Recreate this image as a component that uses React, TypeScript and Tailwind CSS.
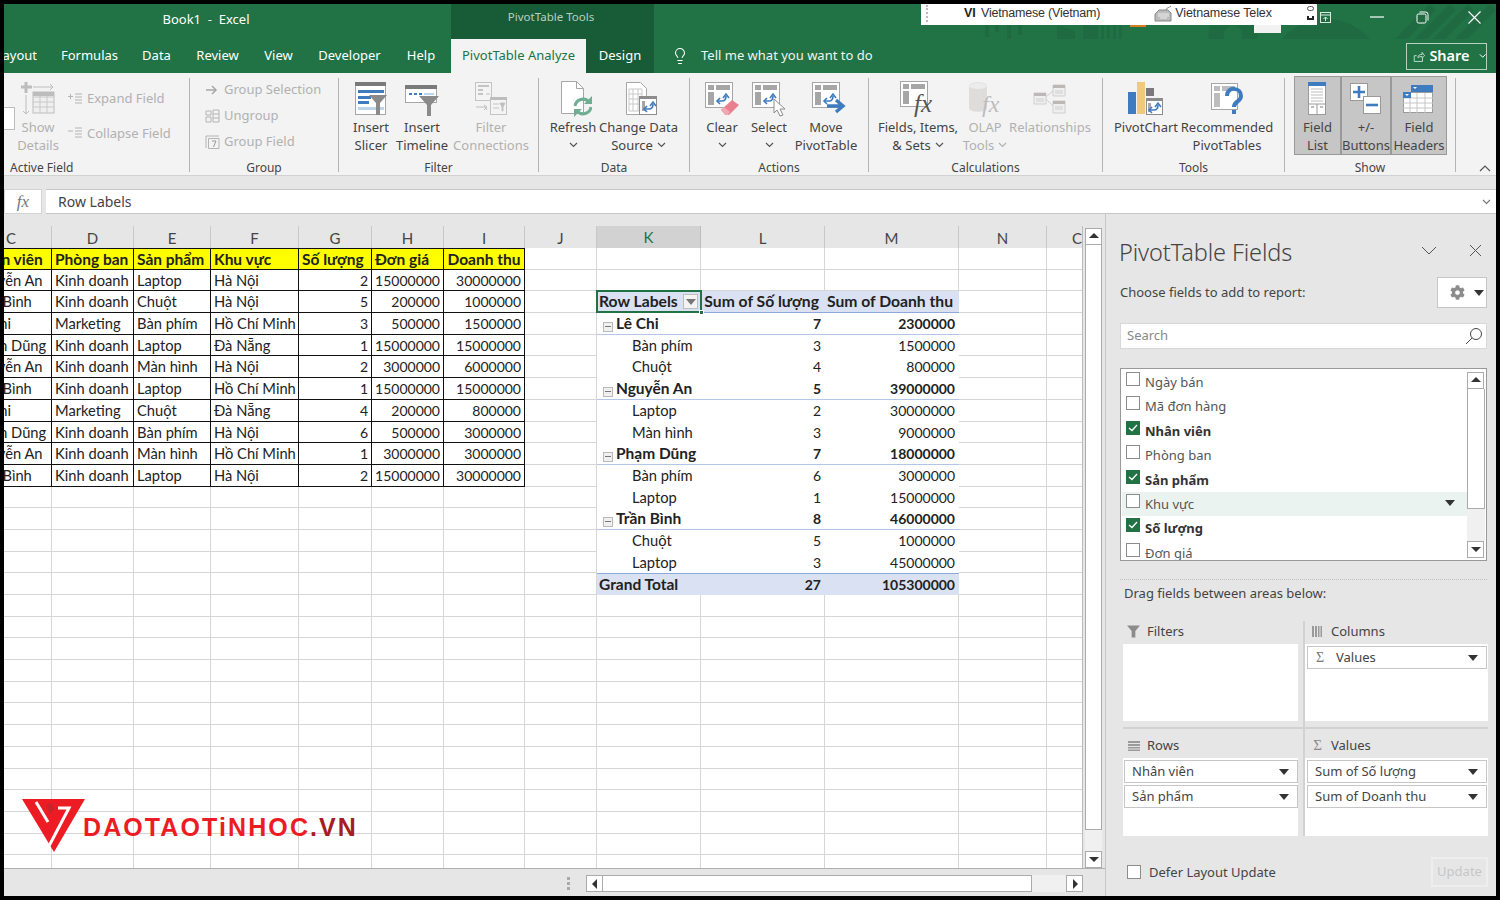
import { type ReactNode } from 'react'
import { Lightbulb } from 'lucide-react'
import { FaCog } from 'react-icons/fa'

const dataRows = [
  ['Nguyễn An', 'Kinh doanh', 'Laptop', 'Hà Nội', '2', '15000000', '30000000'],
  ['Trần Bình', 'Kinh doanh', 'Chuột', 'Hà Nội', '5', '200000', '1000000'],
  ['Lê Chi', 'Marketing', 'Bàn phím', 'Hồ Chí Minh', '3', '500000', '1500000'],
  ['Phạm Dũng', 'Kinh doanh', 'Laptop', 'Đà Nẵng', '1', '15000000', '15000000'],
  ['Nguyễn An', 'Kinh doanh', 'Màn hình', 'Hà Nội', '2', '3000000', '6000000'],
  ['Trần Bình', 'Kinh doanh', 'Laptop', 'Hồ Chí Minh', '1', '15000000', '15000000'],
  ['Lê Chi', 'Marketing', 'Chuột', 'Đà Nẵng', '4', '200000', '800000'],
  ['Phạm Dũng', 'Kinh doanh', 'Bàn phím', 'Hà Nội', '6', '500000', '3000000'],
  ['Nguyễn An', 'Kinh doanh', 'Màn hình', 'Hồ Chí Minh', '1', '3000000', '3000000'],
  ['Trần Bình', 'Kinh doanh', 'Laptop', 'Hà Nội', '2', '15000000', '30000000'],
]
const dataHeader = ['Nhân viên', 'Phòng ban', 'Sản phẩm', 'Khu vực', 'Số lượng', 'Đơn giá', 'Doanh thu']

const pivotRows = [
  { t: 'head', a: 'Row Labels', b: 'Sum of Số lượng', c: 'Sum of Doanh thu' },
  { t: 'group', a: 'Lê Chi', b: '7', c: '2300000' },
  { t: 'item', a: 'Bàn phím', b: '3', c: '1500000' },
  { t: 'item', a: 'Chuột', b: '4', c: '800000' },
  { t: 'group', a: 'Nguyễn An', b: '5', c: '39000000' },
  { t: 'item', a: 'Laptop', b: '2', c: '30000000' },
  { t: 'item', a: 'Màn hình', b: '3', c: '9000000' },
  { t: 'group', a: 'Phạm Dũng', b: '7', c: '18000000' },
  { t: 'item', a: 'Bàn phím', b: '6', c: '3000000' },
  { t: 'item', a: 'Laptop', b: '1', c: '15000000' },
  { t: 'group', a: 'Trần Bình', b: '8', c: '46000000' },
  { t: 'item', a: 'Chuột', b: '5', c: '1000000' },
  { t: 'item', a: 'Laptop', b: '3', c: '45000000' },
  { t: 'total', a: 'Grand Total', b: '27', c: '105300000' },
]

const colNames = ['C', 'D', 'E', 'F', 'G', 'H', 'I', 'J', 'K', 'L', 'M', 'N', 'C']
const fields = [
  { name: 'Ngày bán', on: false },
  { name: 'Mã đơn hàng', on: false },
  { name: 'Nhân viên', on: true },
  { name: 'Phòng ban', on: false },
  { name: 'Sản phẩm', on: true },
  { name: 'Khu vực', on: false, hover: true },
  { name: 'Số lượng', on: true },
  { name: 'Đơn giá', on: false },
]

function Chevron({ className = '', color = '#555' }: { className?: string; color?: string }) {
  return (
    <svg width="9" height="6" viewBox="0 0 9 6" className={className}>
      <path d="M1 1l3.5 3.5L8 1" fill="none" stroke={color} strokeWidth="1.2" />
    </svg>
  )
}

function Caret({ color = '#333' }: { color?: string }) {
  return (
    <svg width="10" height="6" viewBox="0 0 10 6" className="shrink-0">
      <path d="M0 0h10L5 6z" fill={color} />
    </svg>
  )
}

function PivotBase({ c = '#a6a6a6' }: { c?: string }) {
  return (
    <g>
      <rect x="1.5" y="1.5" width="27" height="25" fill="#fff" stroke={c} />
      <rect x="4" y="4" width="6" height="5" fill={c} />
      <rect x="12" y="4" width="14" height="5" fill={c} />
      <rect x="4" y="11" width="6" height="13" fill={c} />
    </g>
  )
}

function SwapArrows({ x = 12, y = 11 }: { x?: number; y?: number }) {
  return (
    <g transform={`translate(${x} ${y})`} fill="none" stroke="#3f7cbf" strokeWidth="1.6">
      <path d="M1 9h5c3 0 4-2 4-5" />
      <path d="M7 6l3-4 3 4" />
      <path d="M4 6L1 9l3 3" />
    </g>
  )
}

const icons: Record<string, ReactNode> = {
  details: (
    <svg width="36" height="36" viewBox="0 0 36 36">
      <path d="M6 1v11M1 6h11" stroke="#bdbdbd" strokeWidth="3" />
      <path d="M13 6h20M30 3l3 3-3 3M6 14v19M3 30l3 3 3-3" fill="none" stroke="#bdbdbd" />
      <rect x="13" y="11" width="21" height="21" fill="#efefef" stroke="#bdbdbd" />
      <path d="M13 16h21M13 21h21M13 26h21M20 11v21M27 11v21" stroke="#c9c9c9" />
      <rect x="13" y="11" width="21" height="4" fill="#bdbdbd" />
    </svg>
  ),
  slicer: (
    <svg width="34" height="36" viewBox="0 0 34 36">
      <rect x="1.5" y="1.5" width="30" height="32" fill="#fff" stroke="#a6a6a6" />
      <rect x="1" y="1" width="31" height="4" fill="#7a7a7a" />
      <rect x="4" y="9" width="26" height="3" fill="#3f7cbf" />
      <rect x="4" y="15" width="13" height="3" fill="#3f7cbf" />
      <rect x="4" y="20" width="11" height="3" fill="#3f7cbf" />
      <rect x="4" y="26" width="26" height="3" fill="#bcd4ec" />
      <path d="M15 14h18l-7 8v12h-4V22z" fill="#8a8a8a" />
    </svg>
  ),
  timeline: (
    <svg width="36" height="36" viewBox="0 0 36 36">
      <rect x="1.5" y="4.5" width="31" height="17" fill="#fff" stroke="#a6a6a6" />
      <rect x="1" y="4" width="32" height="4" fill="#7a7a7a" />
      <path d="M5 13h3M10 13h3M15 13h3" stroke="#3f7cbf" strokeWidth="2" />
      <path d="M20 13h10" stroke="#bcd4ec" strokeWidth="2" />
      <path d="M15 15h20l-8 9v11h-4V24z" fill="#8a8a8a" />
    </svg>
  ),
  connections: (
    <svg width="34" height="36" viewBox="0 0 34 36">
      <rect x="1.5" y="1.5" width="16" height="18" fill="#f4f4f4" stroke="#c4c4c4" />
      <path d="M4 5h11M4 9h5M4 13h5" stroke="#c4c4c4" strokeWidth="2" />
      <rect x="16.5" y="16.5" width="16" height="17" fill="#f4f4f4" stroke="#c4c4c4" />
      <rect x="16" y="16" width="17" height="3" fill="#bdbdbd" />
      <path d="M19 23h6M19 27h6M26 22h5l-2 4v4h-1v-4z" stroke="#c4c4c4" fill="#bdbdbd" />
      <path d="M2 26h9l2 3M10 24l3 2-3 3M16 13l-4 0" stroke="#bdbdbd" fill="none" />
    </svg>
  ),
  refresh: (
    <svg width="32" height="38" viewBox="0 0 32 38" className="ml-[6px]">
      <path d="M1.5 1.5h15l7 7v25h-22z" fill="#fff" stroke="#a6a6a6" />
      <path d="M16.5 1.5v7h7" fill="none" stroke="#a6a6a6" />
      <path d="M15 26a8 8 0 0 1 14-4M31 27a8 8 0 0 1-14 4" fill="none" stroke="#6fae93" strokeWidth="3" />
      <path d="M32 16v8h-8zM14 37v-8h8z" fill="#6fae93" />
    </svg>
  ),
  source: (
    <svg width="34" height="36" viewBox="0 0 34 36" className="ml-[6px]">
      <path d="M1.5 1.5h14l6 6v26h-20z" fill="#fff" stroke="#a6a6a6" />
      <path d="M4 8h13v22H4zM4 13h13M4 18h13M4 23h13M8 8v22M13 8v22" fill="none" stroke="#c9c9c9" />
      <rect x="14.5" y="15.5" width="17" height="18" fill="#fff" stroke="#8c8c8c" />
      <rect x="14" y="15" width="18" height="3" fill="#8c8c8c" />
      <rect x="17" y="20" width="3" height="10" fill="#a6a6a6" />
      <SwapArrows x={18} y={19} />
    </svg>
  ),
  clear: (
    <svg width="36" height="36" viewBox="0 0 36 36">
      <PivotBase />
      <SwapArrows />
      <path d="M17 29l11-10 7 5-10 10h-3z" fill="#e8808f" />
      <path d="M17 29l3-3 6 5-2 3h-3z" fill="#f2a8b2" />
    </svg>
  ),
  select: (
    <svg width="36" height="36" viewBox="0 0 36 36">
      <PivotBase />
      <SwapArrows />
      <path d="M23 18v14l3-3 3 6 3-1-3-6h5z" fill="#fff" stroke="#8c8c8c" />
    </svg>
  ),
  move: (
    <svg width="36" height="36" viewBox="0 0 36 36" className="ml-[5px]">
      <PivotBase />
      <SwapArrows />
      <path d="M16 25h14M25 19l7 6-7 6" fill="none" stroke="#3f7cbf" strokeWidth="3.4" />
    </svg>
  ),
  fields: (
    <svg width="38" height="38" viewBox="0 0 38 38">
      <PivotBase />
      <text x="15" y="32" fontFamily="Liberation Serif, serif" fontStyle="italic" fontSize="25" fill="#555">fx</text>
    </svg>
  ),
  olap: (
    <svg width="34" height="36" viewBox="0 0 34 36">
      <path d="M1 5c0-5 18-5 18 0v22c0 5-18 5-18 0z" fill="#dfdcdc" />
      <ellipse cx="10" cy="5" rx="9" ry="3" fill="#ececec" />
      <text x="14" y="31" fontFamily="Liberation Serif, serif" fontStyle="italic" fontSize="24" fill="#bdbdbd">fx</text>
    </svg>
  ),
  relations: (
    <svg width="34" height="30" viewBox="0 0 34 30">
      <path d="M13 13l7-6M13 15l7 7" stroke="#cfcfcf" fill="none" />
      <path d="M1 9h12v11H1zM20 1h12v11H20zM20 17h12v12H20z" fill="#efefef" stroke="#cfcfcf" />
      <path d="M1 9h12v3H1zM20 1h12v3H20zM20 17h12v3H20z" fill="#bdb8b8" />
      <path d="M3 15h8M3 17h8M22 7h8M22 9h8M22 23h8M22 25h8" stroke="#cfcfcf" />
    </svg>
  ),
  chart: (
    <svg width="36" height="34" viewBox="0 0 36 34">
      <rect x="0" y="10" width="8" height="22" fill="#3f7cbf" />
      <rect x="9" y="0" width="8" height="32" fill="#f0c981" />
      <rect x="18" y="6" width="8" height="8" fill="#7a7a7a" />
      <rect x="18.5" y="16.5" width="16" height="16" fill="#fff" stroke="#8c8c8c" />
      <rect x="18" y="16" width="17" height="3" fill="#8c8c8c" />
      <rect x="20" y="21" width="3" height="9" fill="#a6a6a6" />
      <SwapArrows x={20} y={19} />
    </svg>
  ),
  recommended: (
    <svg width="34" height="34" viewBox="0 0 34 34">
      <rect x="1.5" y="1.5" width="26" height="26" fill="#fff" stroke="#a6a6a6" />
      <rect x="4" y="4" width="6" height="5" fill="#bdbdbd" />
      <rect x="12" y="4" width="13" height="5" fill="#bdbdbd" />
      <rect x="4" y="11" width="6" height="14" fill="#bdbdbd" />
      <path d="M17 14c0-10 14-9 14 0 0 6-7 5-7 11" fill="none" stroke="#3f7cbf" strokeWidth="4" />
      <rect x="22" y="28" width="4" height="4" fill="#3f7cbf" />
    </svg>
  ),
  fieldList: (
    <svg width="20" height="34" viewBox="0 0 20 34">
      <rect x=".5" y=".5" width="17" height="32" fill="#fff" stroke="#9a9a9a" />
      <rect x="0" y="0" width="18" height="4" fill="#3f7cbf" />
      <path d="M3 7h12M3 10h12M3 13h12M3 16h12M3 19h12" stroke="#bdbdbd" />
      <path d="M0 22h18M9 22v11" stroke="#9a9a9a" />
      <path d="M3 25h3M12 25h3" stroke="#bdbdbd" strokeWidth="2" />
    </svg>
  ),
  plusMinus: (
    <svg width="32" height="32" viewBox="0 0 32 32">
      <rect x=".5" y=".5" width="17" height="17" fill="#fff" stroke="#9a9a9a" />
      <path d="M9 3v12M3 9h12" stroke="#3f7cbf" strokeWidth="2.6" />
      <rect x="13.5" y="13.5" width="17" height="17" fill="#fff" stroke="#9a9a9a" />
      <path d="M16 22h12" stroke="#3f7cbf" strokeWidth="2.6" />
    </svg>
  ),
  headers: (
    <svg width="32" height="30" viewBox="0 0 32 30">
      <rect x=".5" y="8.5" width="29" height="20" fill="#fff" stroke="#9a9a9a" />
      <path d="M0 14h30M0 19h30M0 24h30M7 9v20M14 9v20M22 9v20" stroke="#c6c6c6" />
      <rect x="8" y="1" width="22" height="7" fill="#3f7cbf" />
      <rect x="0" y="8" width="8" height="6" fill="#3f7cbf" />
      <path d="M2 10h4l-2 2zM10 3h4l-2 2z" fill="#fff" />
    </svg>
  ),
}

function RibbonButton({
  icon,
  lines,
  w,
  off,
  drop,
  active,
}: {
  icon: string
  lines: string[]
  w: number
  off?: boolean
  drop?: 'inline' | 'below'
  active?: boolean
}) {
  return (
    <div
      style={{ width: w }}
      className={`flex flex-col items-center shrink-0 ${
        active ? '-mt-[2px] h-[79px] bg-[#c6c6c6] border border-[#999] pt-[2px]' : 'pt-[1px]'
      } ${off ? 'text-[#b1b1b1]' : 'text-[#444]'}`}
    >
      <div className="h-[39px] flex items-center justify-center shrink-0">{icons[icon]}</div>
      {lines.map((l, i) => (
        <div key={i} className="h-[18px] leading-[18px] text-[13px] whitespace-nowrap flex items-center gap-[4px]">
          {l}
          {drop === 'inline' && i === lines.length - 1 && <Chevron color={off ? '#b1b1b1' : '#555'} />}
        </div>
      ))}
      {drop === 'below' && (
        <div className="h-[18px] flex items-center">
          <Chevron />
        </div>
      )}
    </div>
  )
}

function RibbonGroup({
  w,
  label,
  labelClass = 'text-center',
  className = '',
  children,
}: {
  w: number
  label: string
  labelClass?: string
  className?: string
  children: ReactNode
}) {
  return (
    <div style={{ width: w }} className="shrink-0 h-[94px] mt-[5px] border-r border-[#b4b4b4] flex flex-col">
      <div className={`h-[82px] shrink-0 flex ${className}`}>{children}</div>
      <div className={`shrink-0 h-[16px] leading-[16px] text-[12px] text-[#444] ${labelClass}`}>{label}</div>
    </div>
  )
}

function SmallRow({ icon, text, className = '' }: { icon: ReactNode; text: string; className?: string }) {
  return (
    <div className={`flex items-center gap-[4px] text-[13px] text-[#b1b1b1] whitespace-nowrap ${className}`}>
      <span className="w-[16px] flex justify-center">{icon}</span>
      {text}
    </div>
  )
}

function TitleBar() {
  return (
    <div className="relative h-[35px] bg-[#217346] flex text-white">
      <svg className="absolute left-[960px] top-0" width="532" height="69" viewBox="0 0 532 69" fill="#1f6a41">
        <path d="M21 21h4v12h-4zM31 21h4v7h-4zM43 21h4v22h-4zM54 21h4v10h-4z" />
        <path d="M93 21l18 6v21H93zM119 21h15v27h-15zM137 21h3v26h-3zM143 21h3v22h-3zM149 21h3v18h-3zM155 21h3v14h-3z" />
        <circle cx="269" cy="31" r="17" fill="none" stroke="#1f6a41" strokeWidth="15" />
        <circle cx="362" cy="73" r="58" />
        <path d="M466 0l-62 62 6 6 62-62zM486 0l-62 62 6 6 62-62zM504 0l-52 52 6 6 52-52zM526 0l-42 42 6 6 42-42z" />
      </svg>
      <div className="relative w-[447px] flex items-center justify-center pb-[4px] text-[13px]">
        <span className="ml-[-43px] whitespace-pre">Book1  -  Excel</span>
      </div>
      <div className="relative w-[203px] bg-[#185c37] flex items-center justify-center text-[11.5px] text-[#b5d1c1] pb-[9px]">
        <span className="ml-[-3px]">PivotTable Tools</span>
      </div>
      <div className="relative ml-auto flex items-center text-[#fff] pb-[9px]">
        <svg width="13" height="13" viewBox="0 0 13 13" className="mr-[38px]">
          <rect x="1.5" y="1.5" width="10" height="10" fill="none" stroke="#dce9e2" />
          <path d="M1 4h11M6.5 10V6M4.5 8l2-2 2 2" fill="none" stroke="#dce9e2" />
        </svg>
        <svg width="14" height="14" viewBox="0 0 14 14" className="mr-[32px]">
          <path d="M0 7h14" stroke="#fff" strokeWidth="1.2" />
        </svg>
        <svg width="13" height="13" viewBox="0 0 13 13" className="mr-[39px]">
          <rect x="1" y="3" width="9" height="9" rx="1.5" fill="none" stroke="#fff" />
          <path d="M3.5 1h6A2.5 2.5 0 0 1 12 3.5v6" fill="none" stroke="#fff" />
        </svg>
        <svg width="13" height="13" viewBox="0 0 13 13" className="mr-[15px]">
          <path d="M.5.5l12 12M12.5.5l-12 12" stroke="#fff" strokeWidth="1.2" />
        </svg>
      </div>
      {/* language bar sits on top of the title bar */}
      <div className="absolute left-[917px] top-0 w-[396px] h-[21px] bg-white flex items-center pb-[3px] text-[12.5px] text-[#333] font-['Liberation_Sans',sans-serif]">
        <div className="ml-[5px] h-[17px] border-l-2 border-dotted border-[#bbb]" />
        <span className="ml-[36px] w-[17px] font-semibold text-[#222]">VI</span>
        <span className="tracking-[-0.2px] whitespace-nowrap">Vietnamese (Vietnam)</span>
        <svg width="18" height="17" viewBox="0 0 18 17" className="ml-[54px]">
          <path d="M12 5c1-3 3-2 5-4" fill="none" stroke="#888" />
          <path d="M2 8l3-3h9l3 3v8H1V9z" fill="#bbb" stroke="#888" />
          <path d="M4 9h11M4 11h11M6 13h7" stroke="#eee" />
        </svg>
        <span className="ml-[3px] tracking-[-0.1px] whitespace-nowrap">Vietnamese Telex</span>
        <div className="ml-auto mr-[3px] flex flex-col items-center gap-[5px]">
          <div className="w-[7px] h-[5px] border border-[#555] rounded-full" />
          <div className="w-[7px] h-[4px] border-x-2 border-b-2 border-[#222]" />
        </div>
      </div>
      <div className="absolute left-[1126px] top-[21px] w-[16px] h-[2px] bg-[#d87f26]" />
      <div className="absolute left-[1250px] top-[21px] w-[27px] h-[8px] bg-[#f2f2f2]" />
    </div>
  )
}

function TabRow() {
  const tabs = [
    ['Formulas', 55],
    ['Data', 29],
    ['Review', 43],
    ['View', 29],
    ['Developer', 63],
    ['Help', 30],
  ] as const
  return (
    <div className="relative h-[34px] bg-[#217346] flex items-center text-white text-[13px]">
      <span className="w-[33px] overflow-hidden whitespace-nowrap flex justify-end">Layout</span>
      <div className="flex gap-[25px] ml-[25px]">
        {tabs.map(([t, w]) => (
          <span key={t} style={{ width: w }} className="text-center whitespace-nowrap flex justify-center">
            {t}
          </span>
        ))}
      </div>
      <div className="ml-[15px] h-full w-[135px] bg-[#f3f3f3] text-[#217346] flex items-center justify-center whitespace-nowrap">
        PivotTable Analyze
      </div>
      <div className="h-full w-[68px] bg-[#185c37] flex items-center justify-center">Design</div>
      <Lightbulb size={18} strokeWidth={1.4} className="ml-[17px]" />
      <span className="ml-[12px] text-[#eef5f1]">Tell me what you want to do</span>
      <div className="ml-auto mr-[9px] h-[27px] w-[81px] border border-[#b7d1c1] flex items-center pl-[6px] gap-[4px]">
        <svg width="15" height="15" viewBox="0 0 15 15" fill="none" stroke="#dce9e2">
          <path d="M1.5 13.5v-7h3M1.5 13.5h10v-4M6 9c0-3 2-4 5-4V2.5l3 4-3 3V7.500c-2 0-4 .5-5 1.500z" />
        </svg>
        <span className="font-semibold text-[14.5px]">Share</span>
        <Chevron color="#fff" className="ml-[5px]" />
      </div>
    </div>
  )
}

function Ribbon() {
  return (
    <div className="h-[103px] bg-[#f3f3f3] border-b border-[#d2d2d2] flex">
      <RibbonGroup w={186} label="Active Field" labelClass="pl-[6px] text-left" className="relative">
        <div className="absolute left-0 top-[29px] w-[11px] h-[23px] bg-white border border-l-0 border-[#bdbdbd]" />
        <div className="ml-[12px]">
          <RibbonButton icon="details" lines={['Show', 'Details']} w={44} off />
        </div>
        <div className="flex flex-col ml-[7px] pt-[11px] gap-[15px]">
          <SmallRow
            text="Expand Field"
            icon={
              <svg width="16" height="12" viewBox="0 0 16 12" stroke="#b4b4b4">
                <path d="M1 3.500h5M3.500 1v5M8 1h7M8 4h7M8 7h7M8 10h7" />
              </svg>
            }
          />
          <SmallRow
            text="Collapse Field"
            icon={
              <svg width="16" height="12" viewBox="0 0 16 12" stroke="#b4b4b4">
                <path d="M1 4h5M8 1h7M8 4h7M8 7h7M8 10h7" />
              </svg>
            }
          />
        </div>
      </RibbonGroup>
      <RibbonGroup w={149} label="Group" className="flex-col pl-[14px] pt-[3px] gap-[8px]">
        <SmallRow
          text="Group Selection"
          className="h-[18px]"
          icon={
            <svg width="12" height="10" viewBox="0 0 12 10" fill="none" stroke="#a8a8a8" strokeWidth="1.500">
              <path d="M0 5h10M6 1l4 4-4 4" />
            </svg>
          }
        />
        <SmallRow
          text="Ungroup"
          className="h-[18px]"
          icon={
            <svg width="15" height="14" viewBox="0 0 15 14" fill="none" stroke="#b4b4b4">
              <path d="M1 2h5v4H1zM1 8h5v5H1zM8 1h6v12H8zM8 5h6M8 9h6" />
            </svg>
          }
        />
        <SmallRow
          text="Group Field"
          className="h-[18px]"
          icon={
            <svg width="15" height="14" viewBox="0 0 15 14" fill="none" stroke="#b4b4b4">
              <path d="M1 1h13M1 1v12M3.500 3.500h10.500v10H3.500z" />
              <path d="M7 6h4L8.500 12" stroke="#999" />
            </svg>
          }
        />
      </RibbonGroup>
      <RibbonGroup w={200} label="Filter" className="pl-[9px]">
        <RibbonButton icon="slicer" lines={['Insert', 'Slicer']} w={46} />
        <RibbonButton icon="timeline" lines={['Insert', 'Timeline']} w={56} />
        <div className="ml-[3px]">
          <RibbonButton icon="connections" lines={['Filter', 'Connections']} w={76} off />
        </div>
      </RibbonGroup>
      <RibbonGroup w={151} label="Data" className="pl-[10px]">
        <RibbonButton icon="refresh" lines={['Refresh']} w={48} drop="below" />
        <RibbonButton icon="source" lines={['Change Data', 'Source']} w={83} drop="inline" />
      </RibbonGroup>
      <RibbonGroup w={179} label="Actions" className="pl-[12px]">
        <RibbonButton icon="clear" lines={['Clear']} w={40} drop="below" />
        <div className="ml-[7px]">
          <RibbonButton icon="select" lines={['Select']} w={40} drop="below" />
        </div>
        <div className="ml-[4px]">
          <RibbonButton icon="move" lines={['Move', 'PivotTable']} w={66} />
        </div>
      </RibbonGroup>
      <RibbonGroup w={234} label="Calculations" className="pl-[10px]">
        <RibbonButton icon="fields" lines={['Fields, Items,', '& Sets']} w={78} drop="inline" />
        <div className="ml-[7px]">
          <RibbonButton icon="olap" lines={['OLAP', 'Tools']} w={42} off drop="inline" />
        </div>
        <div className="ml-[3px]">
          <RibbonButton icon="relations" lines={['Relationships']} w={82} off />
        </div>
      </RibbonGroup>
      <RibbonGroup w={182} label="Tools" className="pl-[10px]">
        <RibbonButton icon="chart" lines={['PivotChart']} w={66} />
        <RibbonButton icon="recommended" lines={['Recommended', 'PivotTables']} w={96} />
      </RibbonGroup>
      <RibbonGroup w={171} label="Show" className="pl-[9px]">
        <RibbonButton icon="fieldList" lines={['Field', 'List']} w={47} active />
        <RibbonButton icon="plusMinus" lines={['+/-', 'Buttons']} w={50} active />
        <RibbonButton icon="headers" lines={['Field', 'Headers']} w={56} active />
      </RibbonGroup>
      <div className="ml-auto mr-[5px] self-end pb-[3px]">
        <svg width="12" height="7" viewBox="0 0 12 7">
          <path d="M1 6l5-5 5 5" fill="none" stroke="#555" strokeWidth="1.200" />
        </svg>
      </div>
    </div>
  )
}

function FormulaBar() {
  return (
    <div className="bg-[#e6e6e6] pt-[13px] flex h-[38px]">
      <div className="w-[38px] h-[25px] bg-white border border-[#d4d4d4] flex items-center justify-center text-[#777] italic text-[17px] font-['Liberation_Serif',serif]">
        fx
      </div>
      <div className="ml-[4px] flex-1 h-[25px] bg-white border-y border-[#c6c6c6] flex items-center pl-[12px] text-[14px] text-[#444]">
        Row Labels
        <Chevron className="ml-auto mr-[5px]" color="#777" />
      </div>
    </div>
  )
}

function SheetCell({ r, c }: { r: number; c: number }) {
  const grid = 'border-r border-b border-[#d6d6d6]'
  // source table, columns C to I
  if (c <= 6 && r <= 10) {
    const text = r === 0 ? dataHeader[c] : dataRows[r - 1][c]
    const right = r > 0 && c >= 4
    return (
      <div
        className={`border-r border-b border-[#111] overflow-hidden whitespace-nowrap px-[3px] leading-[21px] ${
          r === 0 ? 'bg-[#ffff00] font-bold text-[15.5px] border-t' : 'bg-white'
        } ${right ? 'text-right text-[14px]' : ''} ${r > 0 && !right ? 'text-[14.7px]' : ''} ${
          r === 0 && c === 6 ? 'text-center' : ''
        }`}
      >
        <span className={c === 0 ? (r === 0 ? 'ml-[-34px]' : 'ml-[-36px]') : ''}>{text}</span>
      </div>
    )
  }
  // pivot table, columns K to M
  const p = r >= 2 && r <= 15 && c >= 8 && c <= 10 ? pivotRows[r - 2] : null
  if (p) {
    const tone =
      p.t === 'head'
        ? 'bg-[#d9e1f2] font-bold text-[15.7px] border-b border-[#8ea9db]'
        : p.t === 'total'
          ? 'bg-[#d9e1f2] font-bold text-[15.5px] border-t border-[#8ea9db]'
          : p.t === 'group'
            ? 'bg-white font-bold text-[15.5px] border-b border-[#b4c6e7]'
            : 'bg-white text-[14.7px]'
    if (c === 8) {
      return (
        <div className={`relative pl-[2px] pr-[3px] leading-[21px] whitespace-nowrap ${tone}`}>
          {p.t === 'group' && (
            <span className="inline-flex align-[2px] w-[10px] h-[10px] mr-[3px] ml-[4px] border border-[#b9b9b9] bg-[#f0f0f0] items-center justify-center">
              <span className="w-[6px] h-px bg-[#777]" />
            </span>
          )}
          {p.t === 'item' ? <span className="ml-[33px]">{p.a}</span> : p.a}
          {p.t === 'head' && (
            <>
              <span className="absolute right-[3px] top-[3px] w-[15px] h-[15px] bg-[#f3f3f3] border border-[#bdbdbd] flex items-center justify-center">
                <Caret color="#777" />
              </span>
              <span className="absolute -inset-px border-2 border-[#217346] z-10" />
              <span className="absolute -right-[3px] -bottom-[3px] w-[5px] h-[5px] bg-[#217346] border border-white z-20" />
            </>
          )}
        </div>
      )
    }
    return (
      <div
        className={`leading-[21px] whitespace-nowrap text-right ${tone} ${
          p.t === 'head' ? 'pr-[6px]' : 'pr-[4px] !text-[14px]'
        }`}
      >
        {c === 9 ? p.b : p.c}
      </div>
    )
  }
  return <div className={grid} />
}

function Sheet() {
  const rows = Array.from({ length: 29 }, (_, r) => r)
  return (
    <div className="w-[1079px] h-full overflow-hidden relative border-r border-[#bbb] font-['Lato',sans-serif] text-[15px] text-[#222] flex flex-col">
      <div className="grid grid-cols-[48px_82px_77px_88px_73px_72px_81px_72px_104px_124px_134px_88px_36px] h-[22px] bg-[#e6e6e6] shrink-0">
        {colNames.map((n, i) => (
          <div
            key={i}
            className={`flex items-center justify-center border-r text-[#444] ${
              i === 8
                ? 'bg-[#d2d2d2] text-[#217346] border-b-2 border-b-[#217346] border-r-[#bdbdbd]'
                : 'border-b border-b-[#a8a8a8] border-r-[#c8c8c8]'
            } ${i === 0 ? 'justify-start pl-[2px]' : ''} ${i === 12 ? 'justify-end overflow-hidden' : ''}`}
          >
            {n}
          </div>
        ))}
      </div>
      <div className="grid grid-cols-[48px_82px_77px_88px_73px_72px_81px_72px_104px_124px_134px_88px_36px] auto-rows-[21.7px] bg-white flex-1 content-start overflow-hidden">
        {rows.map(r => colNames.map((_, c) => <SheetCell key={`${r}-${c}`} r={r} c={c} />))}
      </div>
      {/* watermark sits on top of the grid */}
      <div className="absolute left-[18px] top-[573px] flex items-center">
        <svg width="64" height="54" viewBox="0 0 64 54">
          <path d="M0 0h63L32 53z" fill="#ed1c24" />
          <path d="M14 3l12 20M36 9h11L27 47" fill="none" stroke="#fff" strokeWidth="3" />
          <path d="M24 6l5-2 4 6-5 5z" fill="#c9242b" />
        </svg>
        <span className="-ml-[3px] mt-[1px] text-[25px] leading-[22px] font-bold font-['Liberation_Sans',sans-serif] text-[#ed1c24] whitespace-nowrap tracking-[2.1px]">
          DAOTAOTiNHOC<span className="text-[#a51c24]">.VN</span>
        </span>
      </div>
    </div>
  )
}

function ScrollButton({ dir, className = '' }: { dir: 'up' | 'down' | 'left' | 'right'; className?: string }) {
  const d = { up: 'M1 7h10L6 2z', down: 'M1 3h10L6 8z', left: 'M8 1v10L3 6z', right: 'M4 1v10l5-5z' }[dir]
  return (
    <div className={`w-[17px] h-[17px] shrink-0 bg-white border border-[#ababab] flex items-center justify-center ${className}`}>
      <svg width="12" height="12" viewBox="0 0 12 12">
        <path d={d} fill="#333" />
      </svg>
    </div>
  )
}

function VerticalScroll() {
  return (
    <div className="w-[17px] ml-[2px] h-full flex flex-col pt-[2px]">
      <ScrollButton dir="up" />
      <div className="h-[585px] bg-white border-x border-b border-[#ababab]" />
      <div className="flex-1 bg-[#f0f0f0]" />
      <ScrollButton dir="down" />
    </div>
  )
}

function StatusBar() {
  return (
    <div className="h-[28px] bg-[#e6e6e6] border-t border-[#b0b0b0] flex pt-[6px]">
      <div className="ml-[563px] w-[4px] mt-[2px] h-[13px] flex flex-col justify-between">
        <span className="w-[3px] h-[3px] bg-[#aaa]" />
        <span className="w-[3px] h-[3px] bg-[#aaa]" />
        <span className="w-[3px] h-[3px] bg-[#aaa]" />
      </div>
      <div className="ml-[15px] flex h-[17px]">
        <ScrollButton dir="left" />
        <div className="w-[429px] bg-white border-y border-r border-[#ababab]" />
        <div className="w-[34px] bg-[#f0f0f0]" />
        <ScrollButton dir="right" />
      </div>
    </div>
  )
}

function FieldCheck({ on }: { on: boolean }) {
  return (
    <span
      className={`w-[14px] h-[14px] shrink-0 border flex items-center justify-center ${
        on ? 'bg-[#217346] border-[#217346]' : 'bg-white border-[#8c8c8c]'
      }`}
    >
      {on && (
        <svg width="10" height="8" viewBox="0 0 10 8">
          <path d="M1 4l3 2.500L9 1" fill="none" stroke="#fff" strokeWidth="1.300" />
        </svg>
      )}
    </span>
  )
}

function FieldList() {
  return (
    <div className="mt-[19px] h-[193px] bg-white border border-[#999] flex overflow-hidden">
      <div className="flex-1 pt-[1px] pl-[1px]">
        {fields.map(f => (
          <div
            key={f.name}
            className={`h-[24.4px] flex pl-[4px] pr-[12px] ${f.hover ? 'bg-[#eaf3ef]' : ''} ${
              f.on ? 'font-bold text-[#333]' : 'text-[#555]'
            }`}
          >
            <span className="pt-[2px]">
              <FieldCheck on={f.on} />
            </span>
            <span className="ml-[5px] pt-[3px] leading-[18px]">{f.name}</span>
            {f.hover && (
              <span className="ml-auto pt-[8px]">
                <Caret />
              </span>
            )}
          </div>
        ))}
      </div>
      <div className="w-[18px] mr-[1px] pt-[3px] pb-[2px] flex flex-col">
        <ScrollButton dir="up" />
        <div className="h-[120px] bg-white border-x border-b border-[#ababab]" />
        <div className="flex-1 bg-[#f0f0f0]" />
        <ScrollButton dir="down" />
      </div>
    </div>
  )
}

function AreaItem({ text, sigma }: { text: string; sigma?: boolean }) {
  return (
    <div className="h-[23px] bg-white border border-[#c6c6c6] flex items-center pl-[7px] pr-[8px] text-[#444]">
      {sigma && <span className="ml-[1px] w-[20px] text-[#777] font-['Liberation_Serif',serif] text-[14px]">Σ</span>}
      <span className="pt-[1px]">{text}</span>
      <span className="ml-auto">
        <Caret />
      </span>
    </div>
  )
}

function AreaHead({ icon, text, className = '' }: { icon: ReactNode; text: string; className?: string }) {
  return (
    <div className={`flex items-center text-[#444] ${className}`}>
      <span className="w-[13px] mr-[7px] flex justify-center">{icon}</span>
      {text}
    </div>
  )
}

function FieldPanel() {
  return (
    <div className="w-[391px] h-full bg-[#e6e6e6] border-l border-[#c6c6c6] pl-[14px] pr-[9px] text-[13px] flex flex-col">
      <div className="mt-[24px] h-[30px] flex items-center">
        <span className="-ml-[1px] text-[23.5px] font-light text-[#444] tracking-[-0.1px]">PivotTable Fields</span>
        <svg width="16" height="9" viewBox="0 0 16 9" className="ml-auto mr-[32px] mb-[6px]">
          <path d="M1 1l7 7 7-7" fill="none" stroke="#555" />
        </svg>
        <svg width="13" height="13" viewBox="0 0 13 13" className="mr-[5px] mb-[6px]">
          <path d="M1 1l11 11M12 1L1 12" stroke="#555" />
        </svg>
      </div>
      <div className="mt-[9px] h-[31px] flex items-center text-[#444]">
        Choose fields to add to report:
        <div className="ml-auto w-[50px] h-[31px] bg-white border border-[#c6c6c6] flex items-center pl-[12px] gap-[9px]">
          <FaCog size={15} color="#8c8c8c" />
          <Caret />
        </div>
      </div>
      <div className="mt-[15px] h-[26px] bg-white border border-[#d8d8d8] flex items-center pl-[6px] pr-[3px] text-[#888]">
        Search
        <svg width="18" height="18" viewBox="0 0 18 18" className="ml-auto" fill="none" stroke="#444">
          <circle cx="11" cy="7" r="5.500" />
          <path d="M7 11l-6 6" />
        </svg>
      </div>
      <FieldList />
      <div className="mt-[18px] border-t border-dotted border-[#c0c0c0]" />
      <div className="mt-[4px] h-[18px] leading-[18px] pl-[4px] text-[#444]">Drag fields between areas below:</div>
      <div className="mt-[19px] flex border-b-2 border-[#d2d2d2] pb-[6px] ml-[3px] -mr-[1px]">
        <div className="w-[182px] border-r-2 border-[#d2d2d2] -mb-[6px] pb-[6px]">
          <AreaHead
            text="Filters"
            className="h-[23px] pl-[4px] pb-[2px]"
            icon={
              <svg width="14" height="13" viewBox="0 0 14 13">
                <path d="M0 0h14L9 6v7H5V6z" fill="#8c8c8c" />
              </svg>
            }
          />
          <div className="w-[175px] h-[77px] bg-white" />
        </div>
        <div className="flex-1">
          <AreaHead
            text="Columns"
            className="h-[23px] pl-[6px] pb-[2px]"
            icon={
              <svg width="11" height="11" viewBox="0 0 11 11" fill="#9a9a9a">
                <path d="M0 0h2v11H0zM3 0h2v11H3zM6 0h1.500v11H6zM8.500 0H10v11H8.500z" />
              </svg>
            }
          />
          <div className="h-[77px] bg-white pt-[2px] pl-[2px] pr-[1px]">
            <AreaItem text="Values" sigma />
          </div>
        </div>
      </div>
      <div className="flex ml-[3px] -mr-[1px]">
        <div className="w-[182px] border-r-2 border-[#d2d2d2]">
          <AreaHead
            text="Rows"
            className="h-[29px] pl-[4px] pt-[4px]"
            icon={
              <svg width="12" height="10" viewBox="0 0 12 10" fill="#9a9a9a">
                <path d="M0 0h12v2H0zM0 3h12v2H0zM0 6h12v1.500H0zM0 8.500h12V10H0z" />
              </svg>
            }
          />
          <div className="w-[175px] h-[78px] bg-white pt-[2px] pl-[1px] flex flex-col gap-[2px]">
            <AreaItem text="Nhân viên" />
            <AreaItem text="Sản phẩm" />
          </div>
        </div>
        <div className="flex-1">
          <AreaHead
            text="Values"
            className="h-[29px] pl-[6px] pt-[4px]"
            icon={<span className="text-[#8c8c8c] text-[15px] font-['Liberation_Serif',serif]">Σ</span>}
          />
          <div className="h-[78px] bg-white pt-[2px] pl-[2px] pr-[1px] flex flex-col gap-[2px]">
            <AreaItem text="Sum of Số lượng" />
            <AreaItem text="Sum of Doanh thu" />
          </div>
        </div>
      </div>
      <div className="mt-[21px] h-[30px] flex items-center pl-[7px] -mr-[1px] text-[#444]">
        <FieldCheck on={false} />
        <span className="ml-[8px] pt-[2px] text-[13px]">Defer Layout Update</span>
        <div className="ml-auto w-[57px] h-[30px] border-2 border-[#eeeeee] flex items-center justify-center text-[#c6c6c6]">
          Update
        </div>
      </div>
    </div>
  )
}

export default function App() {
  return (
    <div className="w-[1500px] h-[900px] bg-black p-[4px] overflow-hidden font-['Noto_Sans',sans-serif]">
      <div className="w-[1492px] h-[892px] flex flex-col overflow-hidden bg-[#e6e6e6]">
        <TitleBar />
        <TabRow />
        <Ribbon />
        <FormulaBar />
        <div className="flex flex-1 min-h-0">
          <div className="w-[1101px] flex flex-col">
            <div className="flex h-[654px] pt-[12px]">
              <Sheet />
              <VerticalScroll />
            </div>
            <StatusBar />
          </div>
          <FieldPanel />
        </div>
      </div>
    </div>
  )
}
